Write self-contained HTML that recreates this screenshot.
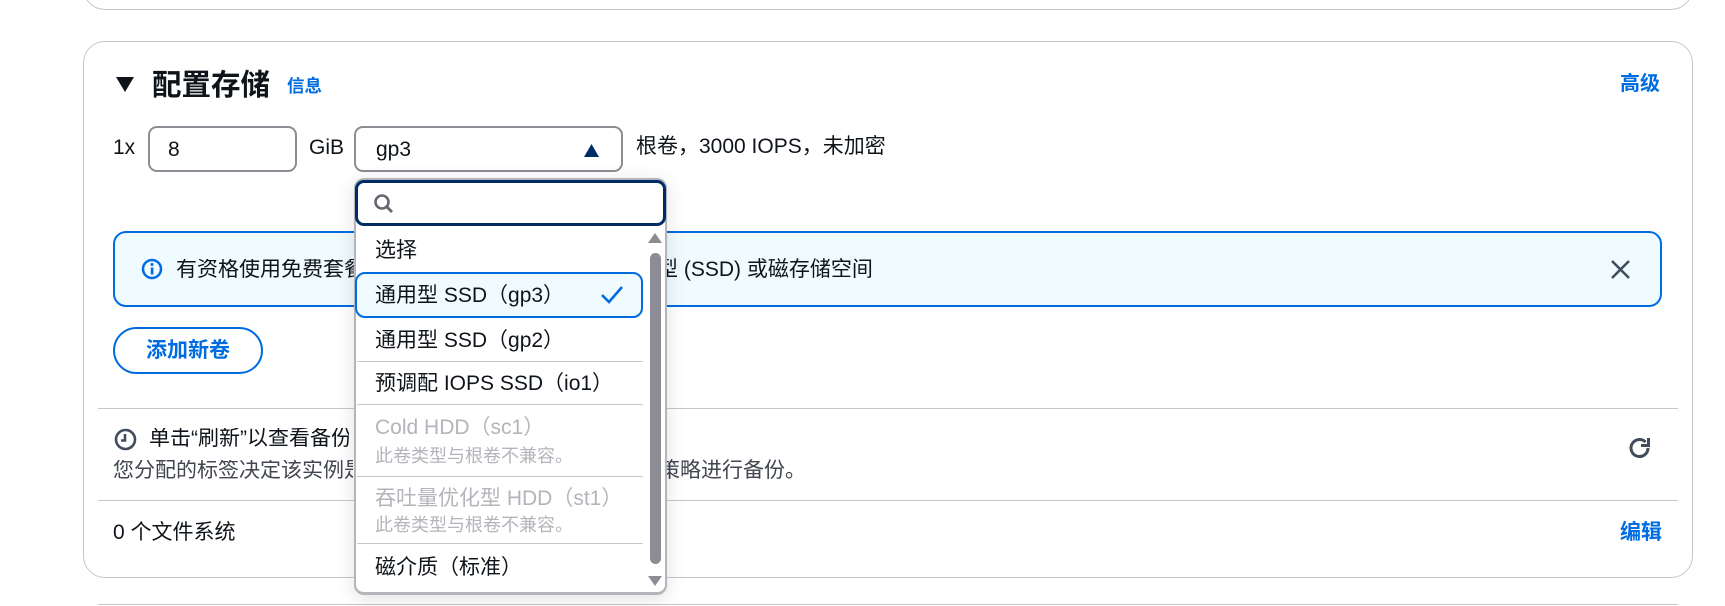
<!DOCTYPE html>
<html><head><meta charset="utf-8">
<style>
*{box-sizing:border-box;margin:0;padding:0}
body{width:1725px;height:606px;background:#fff;position:relative;overflow:hidden;font-family:"Liberation Sans","Noto Sans CJK SC",sans-serif;color:#0f141a;font-size:21px}
.a{position:absolute;white-space:nowrap;line-height:1}
.blue{color:#006ce0}
.sep{position:absolute;height:1px;background:#c6c6cd}
.opt{position:absolute;left:375px;font-size:21px;line-height:1;white-space:nowrap}
.dis{color:#b4b4bb}
.desc{font-size:18px;color:#b4b4bb}
</style></head><body>
<div style="position:absolute;left:83px;top:-30px;width:1610px;height:40px;border:1px solid #c6c6cd;border-top:none;border-radius:0 0 22px 22px"></div>
<div style="position:absolute;left:83px;top:41px;width:1610px;height:537px;border:1px solid #c6c6cd;border-radius:22px"></div>

<svg class="a" style="left:116px;top:77px" width="18" height="15"><polygon points="0,0 18,0 9,15" fill="#0f141a"/></svg>
<div class="a" style="left:152px;top:71px;font-size:29.5px;font-weight:bold">配置存储</div>
<div class="a blue" style="left:287px;top:78px;font-size:17.5px;font-weight:bold">信息</div>
<div class="a blue" style="left:1620px;top:74px;font-size:20px;font-weight:bold">高级</div>

<div class="a" style="left:113px;top:137px">1x</div>
<div style="position:absolute;left:148px;top:126px;width:149px;height:46px;border:2px solid #8c8c94;border-radius:9px"></div>
<div class="a" style="left:168px;top:139px">8</div>
<div class="a" style="left:309px;top:137px">GiB</div>
<div style="position:absolute;left:354px;top:126px;width:269px;height:46px;border:2px solid #8c8c94;border-radius:9px"></div>
<div class="a" style="left:376px;top:139px">gp3</div>
<svg class="a" style="left:584px;top:144px" width="15" height="13"><polygon points="7.5,0 15,13 0,13" fill="#002b66"/></svg>
<div class="a" style="left:636px;top:136px">根卷，3000 IOPS，未加密</div>

<!-- alert -->
<div style="position:absolute;left:113px;top:231px;width:1549px;height:76px;border:2px solid #006ce0;border-radius:13px;background:#f0fbff"></div>
<svg class="a" style="left:141px;top:258px" width="22" height="22"><circle cx="11" cy="11" r="9" fill="none" stroke="#006ce0" stroke-width="2.5"/><rect x="9.8" y="9.5" width="2.6" height="7" fill="#006ce0"/><circle cx="11" cy="6.5" r="1.5" fill="#006ce0"/></svg>
<div class="a" style="left:176px;top:259px;width:470px;overflow:hidden">有资格使用免费套餐的客户最多可获得</div>
<div class="a" style="left:657px;top:259px">型 (SSD) 或磁存储空间</div>
<svg class="a" style="left:1610px;top:259px" width="21" height="21"><path d="M2 2L19 19M19 2L2 19" stroke="#414d5c" stroke-width="2.6"/></svg>

<div style="position:absolute;left:113px;top:327px;width:150px;height:47px;border:2px solid #006ce0;border-radius:24px"></div>
<div class="a blue" style="left:146px;top:340px;font-weight:bold">添加新卷</div>

<div class="sep" style="left:98px;top:408px;width:1580px"></div>
<svg class="a" style="left:114px;top:428px" width="23" height="23"><circle cx="11.5" cy="11.5" r="9.5" fill="none" stroke="#414d5c" stroke-width="2.6"/><path d="M11 6v6.5H7" fill="none" stroke="#414d5c" stroke-width="2.6"/></svg>
<div class="a" style="left:149px;top:428px;width:200px;overflow:hidden">单击“刷新”以查看备份信息</div>
<div class="a" style="left:113px;top:460px;color:#424650;width:240px;overflow:hidden">您分配的标签决定该实例是否将通过</div>
<div class="a" style="left:659px;top:460px;color:#424650">策略进行备份。</div>
<svg class="a" style="left:1626px;top:434px" width="28" height="28"><path d="M22 14a8.5 8.5 0 1 1-2.5-6" fill="none" stroke="#414d5c" stroke-width="3"/><path d="M22.5 4v7.5H15" fill="none" stroke="#414d5c" stroke-width="3"/></svg>

<div class="sep" style="left:98px;top:500px;width:1580px"></div>
<div class="a" style="left:113px;top:522px">0 个文件系统</div>
<div class="a blue" style="left:1620px;top:522px;font-weight:bold">编辑</div>
<div class="sep" style="left:98px;top:604px;width:1580px"></div>

<!-- dropdown -->
<div style="position:absolute;left:354px;top:178px;width:313px;height:417px;border:2px solid #b4b4bb;border-bottom-width:3px;border-radius:10px;background:#fff;box-shadow:0 4px 20px rgba(0,7,22,.12)"></div>
<div style="position:absolute;left:355px;top:180px;width:311px;height:46px;border:3px solid #002b66;border-radius:9px;background:#fff"></div>
<svg class="a" style="left:373px;top:193px" width="22" height="22"><circle cx="9" cy="9" r="6.5" fill="none" stroke="#656871" stroke-width="2.6"/><path d="M13.5 13.5L19 19" stroke="#656871" stroke-width="2.8"/></svg>

<div class="opt" style="top:240px">选择</div>
<div style="position:absolute;left:355px;top:272px;width:288px;height:46px;border:2px solid #006ce0;border-radius:10px;background:#f0fbff"></div>
<div class="opt" style="top:285px">通用型 SSD（gp3）</div>
<svg class="a" style="left:600px;top:285px" width="24" height="20"><path d="M2 10l7 7L22 2" fill="none" stroke="#006ce0" stroke-width="2.6"/></svg>
<div class="opt" style="top:330px">通用型 SSD（gp2）</div>
<div class="sep" style="left:357px;top:361px;width:286px"></div>
<div class="opt" style="top:373px">预调配 IOPS SSD（io1）</div>
<div class="sep" style="left:357px;top:404px;width:286px"></div>
<div class="opt dis" style="top:417px">Cold HDD（sc1）</div>
<div class="opt desc" style="top:447px">此卷类型与根卷不兼容。</div>
<div class="sep" style="left:357px;top:476px;width:286px"></div>
<div class="opt dis" style="top:488px">吞吐量优化型 HDD（st1）</div>
<div class="opt desc" style="top:516px">此卷类型与根卷不兼容。</div>
<div class="sep" style="left:357px;top:543px;width:286px"></div>
<div class="opt" style="top:557px">磁介质（标准）</div>

<svg class="a" style="left:648px;top:233px" width="14" height="10"><polygon points="7,0 14,10 0,10" fill="#8c8c94"/></svg>
<div style="position:absolute;left:650px;top:253px;width:11px;height:311px;border-radius:6px;background:#8c8c94"></div>
<svg class="a" style="left:648px;top:576px" width="14" height="10"><polygon points="0,0 14,0 7,10" fill="#8c8c94"/></svg>
</body></html>
